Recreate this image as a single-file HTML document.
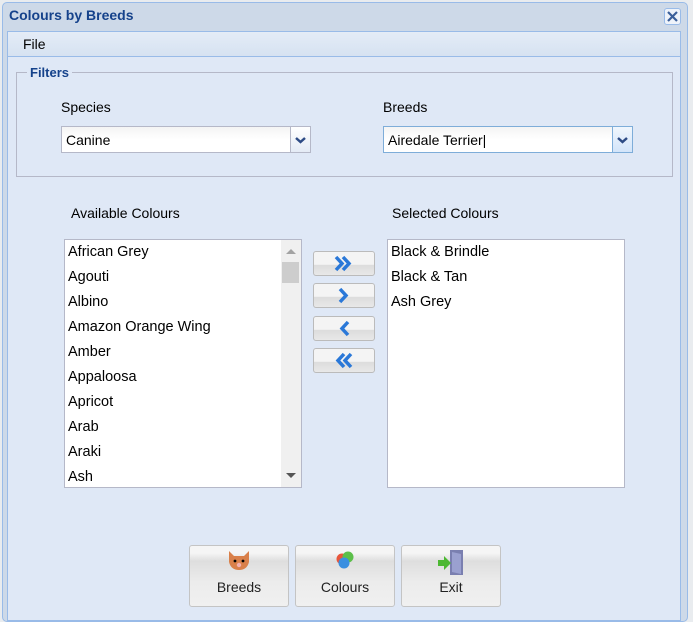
<!DOCTYPE html>
<html><head><meta charset="utf-8"><style>
*{box-sizing:border-box;margin:0;padding:0}
body{width:693px;height:616px;overflow:hidden;background:#e9ecef;font-family:"Liberation Sans",sans-serif;position:relative}
.a{position:absolute}
.win{left:2px;top:2px;width:686px;height:620px;background:#cdd9e8;border:1px solid #99bbe8;border-radius:5px}
.title{left:9px;top:7px;font-size:14px;font-weight:bold;color:#15428b}
.close{left:664px;top:8px;width:17px;height:17px;border:1px solid #99bbe8;border-radius:3px;background:#eef3fa}
.body{left:7px;top:31px;width:674px;height:590px;background:#dfe8f6;border:1px solid #99bbe8}
.menu{left:8px;top:32px;width:672px;height:25px;background:linear-gradient(#e4ecf7,#d6e2f1);border-bottom:1px solid #99bbe8;font-size:14px;padding:4px 0 0 15px;color:#000}
.fs{left:16px;top:72px;width:657px;height:105px;border:1px solid #b5b8c8}
.leg{left:27px;top:65px;background:#dfe8f6;padding:0 3px;font-size:13px;font-weight:bold;color:#15428b}
.lbl{font-size:14px;color:#000}
.combo{height:27px;background:linear-gradient(#f4f4f4,#fff 50%);border:1px solid #b5b8c8;font-size:14px;padding:5px 0 0 4px}
.dd{width:21px;height:27px;border:1px solid #b5b8c8;background:linear-gradient(#fff,#e4ebf5);top:126px}
.list{background:#fff;border:1px solid #b5b8c8;width:238px;height:249px;top:239px}
.it{position:absolute;left:3px;font-size:14.5px;color:#000}
.btn{border:1px solid #bbb;border-radius:3px;background:linear-gradient(#f4f4f4 0,#f4f4f4 55%,#dcdcdc 56%,#e8e8e8 100%);width:62px;height:25px;left:313px}
.bb{border:1px solid #c4c4c4;border-radius:3px;background:linear-gradient(#f5f5f5,#f5f5f5 12%,#dedede 25%,#ececec 60%,#f0f0f0);width:100px;height:62px;top:545px;text-align:center;font-size:14px;color:#222;padding-top:33px}
</style></head><body>
<div class="a win"></div>
<div class="a title">Colours by Breeds</div>
<div class="a close"><svg width="15" height="15" viewBox="0 0 15 15"><path d="M3 3L12 12M12 3L3 12" stroke="#3a5f9a" stroke-width="2.2"/></svg></div>
<div class="a body"></div>
<div class="a menu">File</div>
<div class="a fs"></div>
<div class="a leg">Filters</div>
<div class="a lbl" style="left:61px;top:99px">Species</div>
<div class="a lbl" style="left:383px;top:99px">Breeds</div>
<div class="a combo" style="left:61px;top:126px;width:230px">Canine</div>
<div class="a dd" style="left:290px"><svg width="19" height="25"><path d="M5 11l4.5 4 4.5-4" stroke="#2d4b85" stroke-width="2.5" fill="none"/></svg></div>
<div class="a combo" style="left:383px;top:126px;width:230px;border-color:#7eadd9">Airedale Terrier|</div>
<div class="a dd" style="left:612px;border-color:#7eadd9;background:linear-gradient(#f0f6fd,#d3e5fa)"><svg width="19" height="25"><path d="M5 11l4.5 4 4.5-4" stroke="#2d4b85" stroke-width="2.5" fill="none"/></svg></div>
<div class="a lbl" style="left:71px;top:205px">Available Colours</div>
<div class="a lbl" style="left:392px;top:205px">Selected Colours</div>
<div class="a list" style="left:64px">
<div class="it" style="top:4px">African Grey</div>
<div class="it" style="top:29px">Agouti</div>
<div class="it" style="top:54px">Albino</div>
<div class="it" style="top:79px">Amazon Orange Wing</div>
<div class="it" style="top:104px">Amber</div>
<div class="it" style="top:129px">Appaloosa</div>
<div class="it" style="top:154px">Apricot</div>
<div class="it" style="top:179px">Arab</div>
<div class="it" style="top:204px">Araki</div>
<div class="it" style="top:229px">Ash</div>
<div class="a" style="left:216px;top:0;width:20px;height:247px;background:#f0f0f0">
<div class="a" style="left:5px;top:9px;width:0;height:0;border:5px solid transparent;border-bottom-color:#a3a3a3;border-top:0"></div>
<div class="a" style="left:1px;top:22px;width:17px;height:21px;background:#cdcdcd"></div>
<div class="a" style="left:5px;top:233px;width:0;height:0;border:5px solid transparent;border-top-color:#555;border-bottom:0"></div>
</div></div>
<div class="a list" style="left:387px">
<div class="it" style="top:4px">Black &amp; Brindle</div>
<div class="it" style="top:29px">Black &amp; Tan</div>
<div class="it" style="top:54px">Ash Grey</div>
</div>
<div class="a btn" style="top:251px"><svg width="60" height="23"><path d="M22 5l6 6.5-6 6.5M29 5l6 6.5-6 6.5" stroke="#2a78d8" stroke-width="3.5" fill="none"/></svg></div>
<div class="a btn" style="top:283px"><svg width="60" height="23"><path d="M26 5l6 6.5-6 6.5" stroke="#2a78d8" stroke-width="3.5" fill="none"/></svg></div>
<div class="a btn" style="top:316px"><svg width="60" height="23"><path d="M34 5l-6 6.5 6 6.5" stroke="#2a78d8" stroke-width="3.5" fill="none"/></svg></div>
<div class="a btn" style="top:348px"><svg width="60" height="23"><path d="M30 5l-6 6.5 6 6.5M37 5l-6 6.5 6 6.5" stroke="#2a78d8" stroke-width="3.5" fill="none"/></svg></div>
<div class="a bb" style="left:189px">Breeds
<svg class="a" style="left:37px;top:3px" width="24" height="22"><path d="M2 2l5 5h10l5-5v11q-2 8-10 8t-10-8z" fill="#d9804a"/><circle cx="8" cy="12" r="1.4"/><circle cx="16" cy="12" r="1.4"/><circle cx="12" cy="16" r="2.2" fill="#f2b0b0"/></svg></div>
<div class="a bb" style="left:295px">Colours
<svg class="a" style="left:37px;top:3px" width="24" height="22"><circle cx="9" cy="10" r="5.5" fill="#e8553a"/><circle cx="15" cy="8" r="5.5" fill="#5cbf4a"/><circle cx="11" cy="14" r="5.5" fill="#3a8fe0"/></svg></div>
<div class="a bb" style="left:401px">Exit
<svg class="a" style="left:34px;top:3px" width="30" height="28"><path d="M14 1h13v25H14z" fill="#7a7fb0"/><path d="M16 3l9 2v20l-9-2z" fill="#9aa0d0"/><path d="M2 11h6V7l7 7-7 7v-4H2z" fill="#4cb832"/></svg></div>
</body></html>
